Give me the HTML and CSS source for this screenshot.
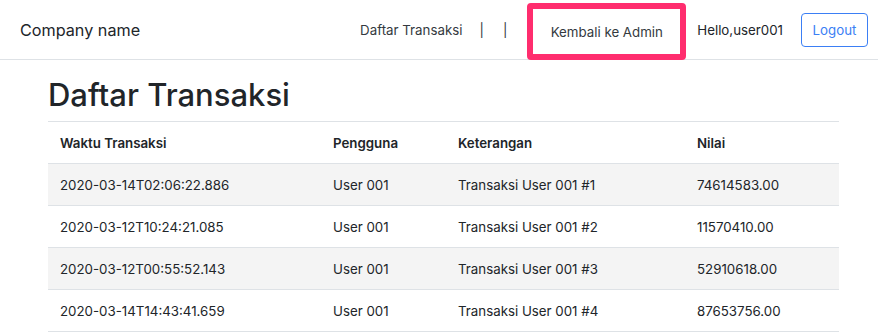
FILE: index.html
```html
<!DOCTYPE html>
<html lang="id">
<head>
<meta charset="utf-8">
<title>Daftar Transaksi</title>
<link rel="stylesheet" href="styles.css">
</head>
<body>
<header class="navbar">
  <a class="brand" href="#">Company name</a>
  <nav class="nav">
    <a class="nav-link" href="#">Daftar Transaksi</a>
    <span class="sep sep-first">|</span>
    <span class="sep">|</span>
    <a class="nav-link admin" href="#">Kembali ke Admin</a>
    <span class="hello">Hello,user001</span>
    <button class="btn-logout" type="button">Logout</button>
  </nav>
</header>
<main class="container">
  <h1 class="title">Daftar Transaksi</h1>
  <table class="table">
    <colgroup>
      <col class="c1"><col class="c2"><col class="c3"><col class="c4">
    </colgroup>
    <thead>
      <tr><th>Waktu Transaksi</th><th>Pengguna</th><th>Keterangan</th><th>Nilai</th></tr>
    </thead>
    <tbody>
      <tr><td>2020-03-14T02:06:22.886</td><td>User 001</td><td>Transaksi User 001 #1</td><td>74614583.00</td></tr>
      <tr><td>2020-03-12T10:24:21.085</td><td>User 001</td><td>Transaksi User 001 #2</td><td>11570410.00</td></tr>
      <tr><td>2020-03-12T00:55:52.143</td><td>User 001</td><td>Transaksi User 001 #3</td><td>52910618.00</td></tr>
      <tr><td>2020-03-14T14:43:41.659</td><td>User 001</td><td>Transaksi User 001 #4</td><td>87653756.00</td></tr>
    </tbody>
  </table>
</main>
</body>
</html>
```
FILE: styles.css
```css
* { box-sizing: border-box; }
html, body { margin: 0; padding: 0; }
body {
  font-family: Inter, "Liberation Sans", sans-serif;
  color: #212529;
  background: #fff;
  font-size: 14px;
}
a { text-decoration: none; color: inherit; }

.navbar {
  height: 60px;
  border-bottom: 1px solid #dee2e6;
  display: flex;
  align-items: center;
  justify-content: space-between;
  padding: 0 10px 0 20px;
}
.brand {
  font-size: 16.2px;
  color: #212529;
}
.nav {
  display: flex;
  align-items: center;
  height: 100%;
}
.nav > * { flex-shrink: 0; }
.nav-link {
  font-size: 13.3px;
  color: #343a40;
}
.sep {
  font-size: 13.3px;
  color: #343a40;
  margin-left: 19px;
}
.sep-first { margin-left: 17px; }
.admin {
  margin-left: 20px;
  align-self: stretch;
  margin-top: 3px;
  width: 159px;
  display: flex;
  align-items: center;
  justify-content: center;
  border: 6px solid #ff2d6e;
  border-radius: 4px;
  height: 57px;
}
.hello {
  margin-left: 11px;
  font-size: 13.3px;
  color: #212529;
}
.btn-logout {
  margin-left: 18px;
  font-family: inherit;
  font-size: 13.3px;
  color: #3b7ff5;
  background: #fff;
  border: 1px solid #3b7ff5;
  border-radius: 4px;
  width: 67px;
  height: 34px;
  padding: 0;
}

.container {
  padding: 0 39px 0 48px;
}
.title {
  font-size: 31px;
  font-weight: 500;
  margin: 16px 0 7px;
  line-height: 38px;
}
.table {
  width: 100%;
  border-collapse: collapse;
  table-layout: fixed;
}
.c1 { width: 273px; }
.c2 { width: 125px; }
.c3 { width: 239px; }
.c4 { width: 154px; }
.table th, .table td {
  text-align: left;
  padding: 0 12px;
  height: 42px;
  border-top: 1px solid #dee2e6;
  font-size: 13.3px;
  vertical-align: middle;
}
.table th { font-weight: 600; }
.table tbody tr:nth-child(odd) { background: #f4f4f4; }
.table tbody tr:last-child td { border-bottom: 1px solid #dee2e6; }
```
